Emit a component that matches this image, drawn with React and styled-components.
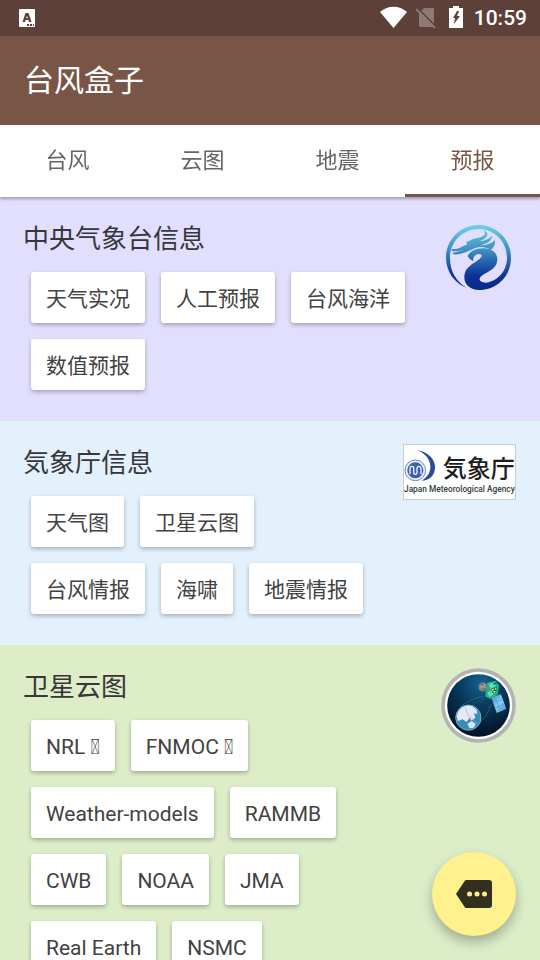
import React, { useState } from "react";
import styled, { createGlobalStyle } from "styled-components";

const tabs = ["台风", "云图", "地震", "预报"];

const CmaLogo = () => (
  <svg width="75" height="75" viewBox="-9 -6 225 225" role="img" aria-label="中央气象台">
    <defs>
      <linearGradient id="cma" gradientUnits="userSpaceOnUse" x1="0" y1="9" x2="0" y2="204">
        <stop offset="0" stopColor="#6fd3e0" />
        <stop offset="0.4" stopColor="#3b8cc0" />
        <stop offset="0.78" stopColor="#0d3194" />
        <stop offset="1" stopColor="#0b2a8c" />
      </linearGradient>
    </defs>
    <g fill="url(#cma)">
      <path d="M68 197C31 183 6 148 6 107C6 53 49 9 104 9C158 9 201 53 201 107C201 161 160 204 106 204C78 204 61 188 61 166C61 140 80 129 97 118C112 108 119 98 106 96C94 95 86 106 88 118L78 112L71 103C76 88 96 79 118 79C146 80 160 94 160 111C160 135 142 145 122 155C101 166 101 182 125 182C161 178 189 147 189 107C189 59 151 21 104 21C57 21 18 59 18 107C18 147 36 178 68 197Z" />
      <path d="M23 81C34 82 44 80 52 75L70 67L66 61C75 58 81 53 90 50C104 47 116 45 121 39C124 34 122 29 116 25C129 28 133 36 129 43C125 50 116 54 106 58C122 56 136 51 144 41C145 55 130 65 109 70C126 70 143 65 152 54C156 66 149 77 140 84C125 74 107 73 92 79C74 87 52 99 29 97L25 92C37 91 49 89 59 84C45 88 31 89 23 86Z" />
    </g>
  </svg>
);

const JmaLogo = () => (
  <svg width="113" height="56" viewBox="39 42 339 168" role="img" aria-label="気象庁">
    <rect x="40.5" y="43.5" width="336" height="165" fill="#fdfefe" stroke="#ccc" strokeWidth="3" />
    <path d="M82 61C121 67 144 98 132 128C125 145 111 151 95 152C117 139 124 121 120 101C116 82 102 69 82 61Z" fill="#2b4a9c" />
    <circle cx="76" cy="121" r="31" fill="#e8edf8" stroke="#6f87be" strokeWidth="3" />
    <circle cx="76" cy="121" r="24" fill="#3e5faa" />
    <path d="M60 133V116Q60 109 66 109T71 116V126Q71 133 76 133T81 126V116Q81 109 87 109T93 116V133" fill="none" stroke="#eef2fb" strokeWidth="4" />
    <JmaName x="158" y="141">気象庁</JmaName>
    <JmaCaption x="42" y="186">Japan Meteorological Agency</JmaCaption>
  </svg>
);

const SatelliteLogo = () => (
  <svg width="75" height="75" viewBox="33 39 225 225" role="img" aria-label="卫星">
    <defs>
      <radialGradient id="space" cx="0.55" cy="0.15" r="0.8">
        <stop offset="0" stopColor="#126390" />
        <stop offset="0.5" stopColor="#073656" />
        <stop offset="1" stopColor="#021429" />
      </radialGradient>
      <linearGradient id="panel" x1="0" y1="0" x2="1" y2="1">
        <stop offset="0" stopColor="#3e91d3" />
        <stop offset="0.5" stopColor="#8cccf4" />
        <stop offset="1" stopColor="#438fc9" />
      </linearGradient>
    </defs>
    <circle cx="145.500" cy="151.500" r="112" fill="#b3b3b3" />
    <circle cx="145.500" cy="151.500" r="101" fill="#fff" />
    <circle cx="145.500" cy="151.500" r="94" fill="url(#space)" />
    <path d="M89 158C111 139 138 127 160 125M151 202C166 187 179 165 184 148" fill="none" stroke="#2d83a5" strokeWidth="2" strokeDasharray="8 2" />
    <path d="M128 148L164 130M152 178L182 151" fill="none" stroke="#1f6080" strokeWidth="2" strokeDasharray="6 4" />
    <circle cx="115" cy="188" r="38" fill="#368cba" />
    <path d="M84 172C91 156 111 147 127 154L140 164L142 178L132 174L136 188L125 197L119 188L110 201L97 193L84 198L80 184Z" fill="#e6e9f4" />
    <path d="M112 207L125 198L137 207L132 218L119 220Z" fill="#dbe4f1" />
    <path d="M105 157L116 182L142 204" fill="none" stroke="#a3b0c4" strokeWidth="2" />
    <circle cx="115" cy="188" r="38" fill="none" stroke="#9ccce3" strokeWidth="2" />
    <path d="M184 127L213 118L229 162L200 174Z" fill="url(#panel)" />
    <path d="M188 142L218 134M195 159L224 148M194 124L211 169" stroke="#4c9ad0" strokeWidth="2" />
    <path d="M172 82L198 78L207 92L204 118L181 132L165 124L168 107Z" fill="#24b08a" />
    <path d="M176 88L192 82L198 92L182 102ZM172 113L186 105L190 119L178 126Z" fill="#62e0b0" />
    <path d="M184 101L201 97L198 111L187 114Z" fill="#126849" />
    <path d="M186 105L192 103M195 102L199 101M190 111L196 109" stroke="#d9ef84" strokeWidth="4" />
    <path d="M190 88L201 83" stroke="#17627c" strokeWidth="4" />
    <circle cx="159" cy="96" r="14" fill="#77797d" />
    <path d="M148 91L170 99M152 104L166 86M148 99L168 90" stroke="#b1b4b5" strokeWidth="2" />
  </svg>
);

// \uE0FF has no glyph on most devices and shows as an empty box
const sections = [
  {
    title: "中央气象台信息",
    color: "#e1dffd",
    logo: <CmaLogo />,
    links: ["天气实况", "人工预报", "台风海洋", "数值预报"],
  },
  {
    title: "気象庁信息",
    color: "#e3f1fd",
    logo: <JmaLogo />,
    links: ["天气图", "卫星云图", "台风情报", "海啸", "地震情报"],
  },
  {
    title: "卫星云图",
    color: "#dcedc8",
    logo: <SatelliteLogo />,
    links: [
      "NRL \uE0FF",
      "FNMOC \uE0FF",
      "Weather-models",
      "RAMMB",
      "CWB",
      "NOAA",
      "JMA",
      "Real Earth",
      "NSMC",
    ],
  },
];

const StatusIcons = () => (
  <svg width="84" height="24" viewBox="0 0 84 24" aria-hidden="true">
    <path d="M0 6C8 -1 19 -1 27 6L13.500 22Z" fill="#fff" />
    <path d="M44 2H53Q54 2 54 3V20Q54 21 53 21H40Q39 21 39 20V7Z" fill="#8d7a73" />
    <path d="M37 2L56 21" stroke="#5d4037" strokeWidth="2" />
    <path d="M36 3L55 22" stroke="#8d7a73" strokeWidth="2" />
    <path d="M73 0H79V2H83V22H69V2H73ZM77 5L73 12H75L74 18L80 10H77L79 5Z" fill="#fff" fillRule="evenodd" />
  </svg>
);

const App = () => {
  const [active, setActive] = useState("预报");

  return (
    <Page>
      <GlobalStyle />
      <StatusBar>
        <svg width="16" height="18" viewBox="0 0 16 18" aria-hidden="true">
          <rect width="16" height="18" rx="1" fill="#fff" />
          <path
            d="M6.500 4H9.500L12.500 13H10L9.400 11H6.600L6 13H3.500ZM8 6.500L7.200 9.200H8.800Z"
            fill="#5d4037"
            fillRule="evenodd"
          />
          <path d="M8 15H10V17H8ZM11 15H13V17H11ZM14 15H15V17H14Z" fill="#5d4037" />
        </svg>
        <StatusRight>
          <StatusIcons />
          <Clock>10:59</Clock>
        </StatusRight>
      </StatusBar>
      <AppBar>
        <AppTitle>台风盒子</AppTitle>
      </AppBar>
      <TabBar role="tablist">
        {tabs.map((tab) => (
          <Tab
            key={tab}
            type="button"
            role="tab"
            aria-selected={tab === active}
            $active={tab === active}
            onClick={() => setActive(tab)}
          >
            {tab}
          </Tab>
        ))}
      </TabBar>
      <Content>
        {sections.map((section) => (
          <Section key={section.title} $color={section.color}>
            <SectionBody>
              <SectionTitle>{section.title}</SectionTitle>
              <Chips>
                {section.links.map((link) => (
                  <Chip key={link} type="button">
                    {link}
                  </Chip>
                ))}
              </Chips>
            </SectionBody>
            <Logo>{section.logo}</Logo>
          </Section>
        ))}
      </Content>
      <Fab type="button" aria-label="更多">
        <svg width="36" height="28" viewBox="0 0 36 28" aria-hidden="true">
          <path d="M10 0H33Q36 0 36 3V25Q36 28 33 28H10Q9 28 8 26L0 14L8 2Q9 0 10 0Z" fill="#332f1e" />
          <circle cx="13.500" cy="14" r="2.500" fill="#fff18d" />
          <circle cx="21" cy="14" r="2.500" fill="#fff18d" />
          <circle cx="28.500" cy="14" r="2.500" fill="#fff18d" />
        </svg>
      </Fab>
    </Page>
  );
};

export default App;

const GlobalStyle = createGlobalStyle`
  * {
    box-sizing: border-box;
  }

  body {
    margin: 0;
    font-family: Roboto, "Noto Sans CJK SC", sans-serif;
  }

  button {
    border: none;
    font-family: inherit;
    cursor: pointer;
  }
`;

const Page = styled.div`
  display: flex;
  flex-direction: column;
  height: 100vh;
  background-color: #dcedc8;
`;

const StatusBar = styled.div`
  display: flex;
  flex: none;
  align-items: center;
  justify-content: space-between;
  height: 36px;
  padding: 0 13px 0 19px;
  background-color: #5d4037;
`;

const StatusRight = styled.div`
  display: flex;
  align-items: center;
  gap: 10px;
`;

const Clock = styled.span`
  color: white;
  font-size: 21px;
  font-weight: 500;
  line-height: 38px;
`;

const AppBar = styled.header`
  display: flex;
  flex: none;
  align-items: center;
  height: 89px;
  padding: 0 24px;
  background-color: #795548;
`;

const AppTitle = styled.h1`
  margin: 0;
  color: white;
  font-size: 30px;
  font-weight: 400;
  line-height: 36px;
`;

const TabBar = styled.div`
  display: flex;
  flex: none;
  height: 72px;
  background-color: white;
  box-shadow: 0 2px 3px rgba(0, 0, 0, 0.3);
  z-index: 1;
`;

const Tab = styled.button`
  flex: 1;
  padding: 3px 0 0;
  border-bottom: 3px solid ${({ $active }) => ($active ? "#795548" : "transparent")};
  background-color: transparent;
  color: ${({ $active }) => ($active ? "#795548" : "#666")};
  font-size: 22px;
  line-height: 24px;
`;

const Content = styled.main`
  flex: 1;
  min-height: 0;
  overflow-y: auto;
  scrollbar-width: none;
`;

const Section = styled.section`
  display: flex;
  align-items: flex-start;
  gap: 24px;
  padding: 23px 24px 31px 23px;
  background-color: ${({ $color }) => $color};
`;

const SectionBody = styled.div`
  flex: 1;
  min-width: 0;
`;

const SectionTitle = styled.h2`
  margin: 0;
  color: #37373a;
  font-size: 26px;
  font-weight: 400;
  line-height: 39px;
`;

const Chips = styled.div`
  display: flex;
  flex-wrap: wrap;
  gap: 16px;
  padding: 13px 8px 0;
`;

const Chip = styled.button`
  height: 51px;
  padding: 2px 15px 0;
  border-radius: 3px;
  background-color: white;
  box-shadow: 0 2px 4px rgba(0, 0, 0, 0.28);
  color: #424242;
  font-size: 21px;
  line-height: 24px;
  white-space: nowrap;
`;

const Logo = styled.div`
  display: flex;
  flex: none;
`;

const JmaName = styled.text`
  fill: #1d1d1f;
  font-family: "Noto Sans CJK JP", sans-serif;
  font-size: 72px;
  font-weight: 500;
`;

const JmaCaption = styled.text`
  fill: #3a3a3c;
  font-family: Roboto, sans-serif;
  font-size: 25px;
  font-weight: 500;
`;

const Fab = styled.button`
  position: fixed;
  right: 24px;
  bottom: 24px;
  display: flex;
  align-items: center;
  justify-content: center;
  width: 84px;
  height: 84px;
  padding: 0;
  border-radius: 50%;
  background-color: #fff18d;
  box-shadow: 0 6px 12px rgba(0, 0, 0, 0.28);
  z-index: 2;
`;
